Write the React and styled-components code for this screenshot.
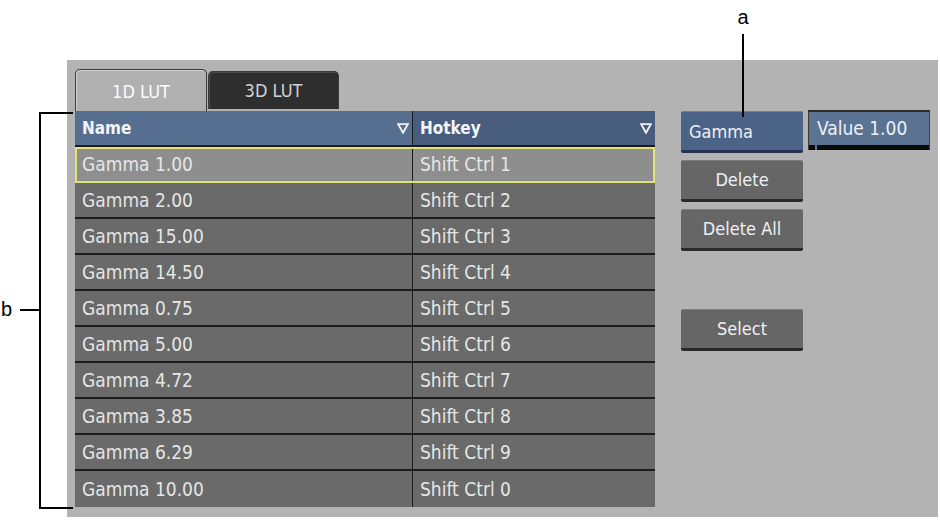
import styled, { createGlobalStyle } from "styled-components";

const GlobalStyle = createGlobalStyle`
  html, body {
    margin: 0;
    padding: 0;
    background: #ffffff;
  }
  body {
    font-family: "DejaVu Sans Condensed", "Open Sans", sans-serif;
  }
`;

const rows = [
  ["Gamma 1.00", "Shift Ctrl 1"],
  ["Gamma 2.00", "Shift Ctrl 2"],
  ["Gamma 15.00", "Shift Ctrl 3"],
  ["Gamma 14.50", "Shift Ctrl 4"],
  ["Gamma 0.75", "Shift Ctrl 5"],
  ["Gamma 5.00", "Shift Ctrl 6"],
  ["Gamma 4.72", "Shift Ctrl 7"],
  ["Gamma 3.85", "Shift Ctrl 8"],
  ["Gamma 6.29", "Shift Ctrl 9"],
  ["Gamma 10.00", "Shift Ctrl 0"],
];

const SortIcon = () => (
  <svg width="12" height="11" viewBox="0 0 12 11">
    <path d="M1.2 1.2 H10.8 L6 9.8 Z" fill="none" stroke="#eef2f8" strokeWidth="1.8" strokeLinejoin="miter" />
  </svg>
);

const App = () => {
  return (
    <Page>
      <GlobalStyle />
      <Callout>
        <CalloutA>a</CalloutA>
        <CalloutLineA />
      </Callout>
      <Bracket>
        <BracketLine />
        <BracketTick />
        <BracketLabel>b</BracketLabel>
      </Bracket>
      <Panel>
        <ListColumn>
          <Tabs>
            <Tab $active>1D LUT</Tab>
            <Tab>3D LUT</Tab>
          </Tabs>
          <Table>
            <HeaderRow>
              <HeaderCell $shade="#566f90" $w={337}>
                <span>Name</span>
                <SortIcon />
              </HeaderCell>
              <HeaderCell $shade="#485d7e" $w={242}>
                <span>Hotkey</span>
                <SortIcon />
              </HeaderCell>
            </HeaderRow>
            {rows.map(([name, key], i) => (
              <Row key={name} $selected={i === 0}>
                <Cell $w={337}>{name}</Cell>
                <Cell $w={242} $divider>{key}</Cell>
              </Row>
            ))}
          </Table>
        </ListColumn>
        <Controls>
          <ControlRow>
            <Button $variant="blue">Gamma</Button>
            <ValueField>Value 1.00</ValueField>
          </ControlRow>
          <Button>Delete</Button>
          <Button>Delete All</Button>
          <Spacer />
          <Button>Select</Button>
        </Controls>
      </Panel>
    </Page>
  );
};

export default App;

const Page = styled.div`
  position: relative;
  width: 940px;
  height: 520px;
  padding-top: 60px;
  box-sizing: border-box;
  overflow: hidden;
  background: #fff;
`;

const Callout = styled.div`
  position: absolute;
  left: 734px;
  top: 6px;
  width: 18px;
  display: flex;
  flex-direction: column;
  align-items: center;
  z-index: 3;
`;

const CalloutA = styled.div`
  font-family: "Liberation Sans", Arial, sans-serif;
  font-size: 20px;
  line-height: 22px;
  color: #000;
`;

const CalloutLineA = styled.div`
  width: 1.5px;
  height: 83px;
  margin-top: 6px;
  background: #000;
`;

const Bracket = styled.div`
  position: absolute;
  left: 0;
  top: 112px;
  width: 74px;
  height: 397px;
`;

const BracketLine = styled.div`
  position: absolute;
  left: 39px;
  top: 0;
  width: 34px;
  height: 100%;
  box-sizing: border-box;
  border: 2px solid #000;
  border-right: none;
`;

const BracketTick = styled.div`
  position: absolute;
  left: 20px;
  top: 197px;
  width: 20px;
  height: 2px;
  background: #000;
`;

const BracketLabel = styled.div`
  position: absolute;
  left: 1px;
  top: 186px;
  font-family: "Liberation Sans", Arial, sans-serif;
  font-size: 20px;
  line-height: 22px;
  color: #000;
`;

const Panel = styled.div`
  margin-left: 67px;
  height: 457px;
  width: 871px;
  background: #b3b3b3;
  box-sizing: border-box;
  padding: 9px 0 0 8px;
  display: flex;
  align-items: flex-start;
`;

const ListColumn = styled.div`
  display: flex;
  flex-direction: column;
  width: 580px;
`;

const Tabs = styled.div`
  display: flex;
  align-items: flex-end;
  height: 42px;
`;

const Tab = styled.div`
  box-sizing: border-box;
  width: ${(p) => (p.$active ? "132px" : "131px")};
  height: ${(p) => (p.$active ? "42px" : "38px")};
  margin-bottom: ${(p) => (p.$active ? "0" : "2px")};
  margin-right: 1px;
  border: 1px solid #3a3a3a;
  border-bottom: none;
  border-radius: 5px 5px 0 0;
  background: ${(p) => (p.$active ? "#b0b0b0" : "#2e2e2e")};
  box-shadow: ${(p) =>
    p.$active ? "inset 1px 1px 0 #d2d2d2" : "inset 1px 1px 0 #4a4a4a"};
  color: ${(p) => (p.$active ? "#fcfcfc" : "#d2d2d2")};
  font-size: 18px;
  display: flex;
  align-items: center;
  justify-content: center;
  padding-top: ${(p) => (p.$active ? "2px" : "0")};
`;

const Table = styled.div`
  display: flex;
  flex-direction: column;
  background: #1c1c1c;
  width: 580px;
`;

const HeaderRow = styled.div`
  display: flex;
  height: 34px;
  border-bottom: 2px solid #1c1c1c;
`;

const HeaderCell = styled.div`
  box-sizing: border-box;
  width: ${(p) => p.$w}px;
  background: ${(p) => p.$shade};
  display: flex;
  align-items: center;
  justify-content: space-between;
  padding: 0 3px 0 7px;
  color: #f2f5fa;
  font-weight: bold;
  font-size: 17px;
  & + & {
    margin-left: 1px;
  }
`;

const Row = styled.div`
  display: flex;
  height: 36px;
  box-sizing: border-box;
  border-bottom: 2px solid #1c1c1c;
  background: ${(p) => (p.$selected ? "#8e8e8e" : "#6a6a6a")};
  outline: ${(p) => (p.$selected ? "2px solid #e2e27a" : "none")};
  outline-offset: -2px;
  &:last-child {
    border-bottom: none;
  }
`;

const Cell = styled.div`
  box-sizing: border-box;
  width: ${(p) => p.$w}px;
  display: flex;
  align-items: center;
  padding-left: 7px;
  color: #e6e6e6;
  font-size: 19px;
  border-left: ${(p) => (p.$divider ? "1px solid #1c1c1c" : "none")};
`;

const Controls = styled.div`
  margin-left: 26px;
  margin-top: 42px;
  display: flex;
  flex-direction: column;
  align-items: flex-start;
  gap: 7px;
`;

const ControlRow = styled.div`
  display: flex;
  gap: 5px;
  align-items: flex-start;
`;

const Button = styled.div`
  box-sizing: border-box;
  width: 122px;
  height: 42px;
  display: flex;
  align-items: center;
  justify-content: ${(p) => (p.$variant === "blue" ? "flex-start" : "center")};
  padding: ${(p) => (p.$variant === "blue" ? "0 0 0 8px" : "0 0 2px 0")};
  background: ${(p) => (p.$variant === "blue" ? "#4b6387" : "#666666")};
  border-top: 1px solid ${(p) => (p.$variant === "blue" ? "#6a82a4" : "#7c7c7c")};
  border-bottom: 3px solid ${(p) => (p.$variant === "blue" ? "#263250" : "#2a2a2a")};
  border-radius: 2px;
  color: #eef0f4;
  font-size: 18px;
`;

const Spacer = styled.div`
  height: 44px;
`;

const ValueField = styled.div`
  position: relative;
  box-sizing: border-box;
  width: 122px;
  height: 40px;
  margin-top: -1px;
  background: #5b7393;
  border-top: 2px solid #2c2c2c;
  border-left: 1px solid #3c3c3c;
  border-right: 1px solid #3c3c3c;
  padding: 0 0 6px 8px;
  display: flex;
  align-items: center;
  color: #eef0f4;
  font-size: 19px;
  &::after {
    content: "";
    position: absolute;
    left: 8px;
    right: 0;
    bottom: 0;
    height: 5px;
    background: #0a0a0a;
  }
  &::before {
    content: "";
    position: absolute;
    left: 0;
    width: 6px;
    bottom: 0;
    height: 5px;
    background: #0a0a0a;
  }
`;
